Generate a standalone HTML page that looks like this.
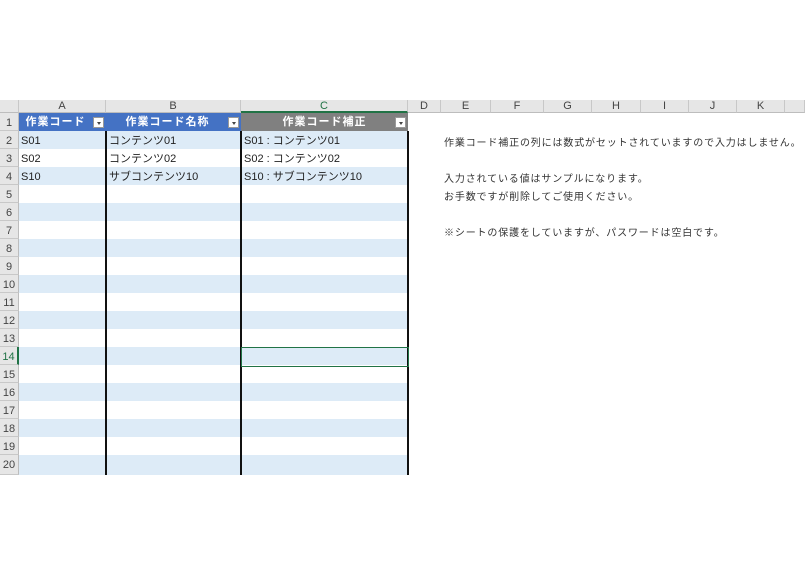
<!DOCTYPE html><html><head><meta charset="utf-8"><style>
body{margin:0;width:805px;height:575px;background:#fff;position:relative;overflow:hidden;font-family:"Liberation Sans","Noto Sans CJK JP",sans-serif;}
div{position:absolute;box-sizing:border-box;}
.ch{top:100px;height:13px;background:#e6e6e6;border-right:1px solid #c8c8c8;border-bottom:1px solid #bdbdbd;font-size:11px;color:#444;text-align:center;line-height:13px;}
.rh{left:0;width:19px;height:18px;background:#e6e6e6;border-bottom:1px solid #c8c8c8;border-right:1px solid #bdbdbd;font-size:11px;color:#444;text-align:center;line-height:21px;}
.s{left:19px;width:389px;height:18px;}
.t{font-size:11px;color:#222;line-height:20px;white-space:nowrap;}
.h{top:113px;height:18px;color:#fff;font-weight:bold;font-size:11px;line-height:19px;text-align:center;letter-spacing:1px;}
.dd{top:117px;width:11px;height:11px;background:#fff;border:1px solid #999;}
.dd:after{content:"";position:absolute;left:3px;top:4px;border:2px solid transparent;border-top:3px solid #444;}
.v{top:131px;width:2px;height:344px;background:#111;}
.n{left:444px;font-size:10px;color:#333;letter-spacing:0.85px;white-space:nowrap;}
</style></head><body>
<div class="ch" style="left:0;width:19px"></div>
<div class="ch" style="left:19px;width:87px">A</div>
<div class="ch" style="left:106px;width:135px">B</div>
<div class="ch" style="left:241px;width:167px;border-bottom:2px solid #217346;color:#217346">C</div>
<div class="ch" style="left:408px;width:33px">D</div>
<div class="ch" style="left:441px;width:50px">E</div>
<div class="ch" style="left:491px;width:53px">F</div>
<div class="ch" style="left:544px;width:48px">G</div>
<div class="ch" style="left:592px;width:49px">H</div>
<div class="ch" style="left:641px;width:48px">I</div>
<div class="ch" style="left:689px;width:48px">J</div>
<div class="ch" style="left:737px;width:48px">K</div>
<div class="ch" style="left:785px;width:20px"></div>

<div class="s" style="top:131px;background:#ddebf7"></div>
<div class="s" style="top:167px;background:#ddebf7"></div>
<div class="s" style="top:203px;background:#ddebf7"></div>
<div class="s" style="top:239px;background:#ddebf7"></div>
<div class="s" style="top:275px;background:#ddebf7"></div>
<div class="s" style="top:311px;background:#ddebf7"></div>
<div class="s" style="top:347px;background:#ddebf7"></div>
<div class="s" style="top:383px;background:#ddebf7"></div>
<div class="s" style="top:419px;background:#ddebf7"></div>
<div class="s" style="top:455px;background:#ddebf7;height:20px"></div>

<div class="rh" style="top:113px">1</div><div class="rh" style="top:131px">2</div><div class="rh" style="top:149px">3</div><div class="rh" style="top:167px">4</div><div class="rh" style="top:185px">5</div><div class="rh" style="top:203px">6</div><div class="rh" style="top:221px">7</div><div class="rh" style="top:239px">8</div><div class="rh" style="top:257px">9</div><div class="rh" style="top:275px">10</div><div class="rh" style="top:293px">11</div><div class="rh" style="top:311px">12</div><div class="rh" style="top:329px">13</div><div class="rh" style="top:347px;color:#217346;border-right:2px solid #217346">14</div><div class="rh" style="top:365px">15</div><div class="rh" style="top:383px">16</div><div class="rh" style="top:401px">17</div><div class="rh" style="top:419px">18</div><div class="rh" style="top:437px">19</div><div class="rh" style="top:455px;height:20px">20</div>

<div class="h" style="left:19px;width:87px;background:#4472c4;padding-right:14px">作業コード</div>
<div class="h" style="left:106px;width:135px;background:#4472c4;padding-right:12px">作業コード名称</div>
<div class="h" style="left:241px;width:167px;background:#808080">作業コード補正</div>
<div class="dd" style="left:93px"></div><div class="dd" style="left:228px"></div><div class="dd" style="left:395px"></div>

<div class="v" style="left:105px"></div><div class="v" style="left:240px"></div><div class="v" style="left:407px"></div>
<div style="left:241px;top:347px;width:168px;height:20px;border:1px solid #217346"></div>

<div class="t" style="left:21px;top:131px">S01</div><div class="t" style="left:21px;top:149px">S02</div><div class="t" style="left:21px;top:167px">S10</div>
<div class="t" style="left:109px;top:131px">コンテンツ01</div><div class="t" style="left:109px;top:149px">コンテンツ02</div><div class="t" style="left:109px;top:167px">サブコンテンツ10</div>
<div class="t" style="left:244px;top:131px">S01 : コンテンツ01</div><div class="t" style="left:244px;top:149px">S02 : コンテンツ02</div><div class="t" style="left:244px;top:167px">S10 : サブコンテンツ10</div>

<div class="n" style="top:134px">作業コード補正の列には数式がセットされていますので入力はしません。</div>
<div class="n" style="top:170px">入力されている値はサンプルになります。</div>
<div class="n" style="top:188px">お手数ですが削除してご使用ください。</div>
<div class="n" style="top:224px">※シートの保護をしていますが、パスワードは空白です。</div>
</body></html>
